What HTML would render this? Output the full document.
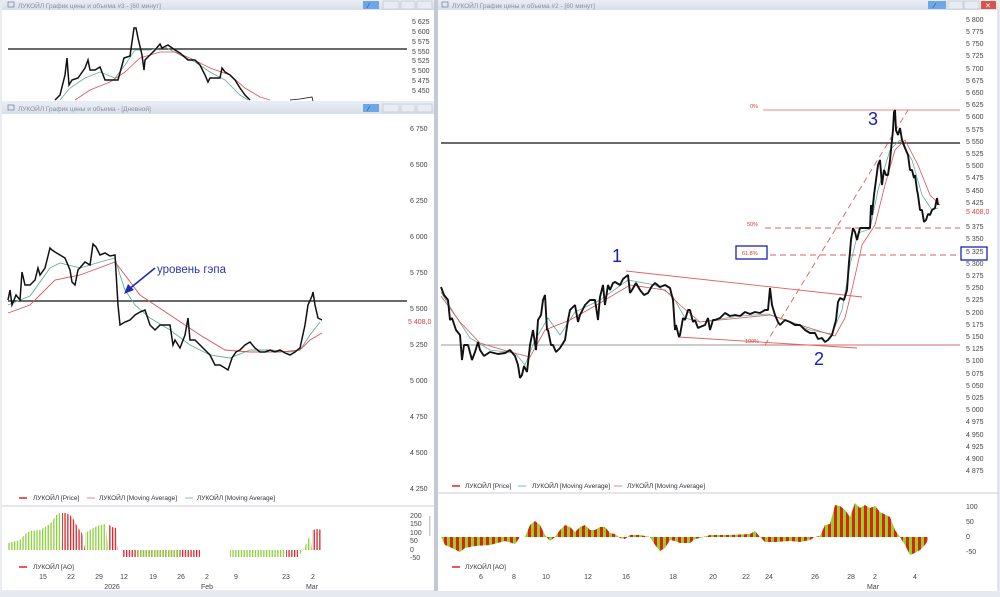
<!DOCTYPE html>
<html><head><meta charset="utf-8"><style>
html,body{margin:0;padding:0;background:#fff;width:1000px;height:597px;overflow:hidden}
svg{display:block}
text{font-family:"Liberation Sans","DejaVu Sans",sans-serif}
.ax{font-size:7px;fill:#444}
.lg{font-size:6.5px;fill:#333}
.tt{font-size:6.5px;fill:#8a8fa0}
</style></head><body>
<svg width="1000" height="597" viewBox="0 0 1000 597" xmlns="http://www.w3.org/2000/svg">
<defs>
<pattern id="mix" width="6" height="10" patternUnits="userSpaceOnUse"><rect width="3.2" height="10" fill="#e81d17"/><rect x="3.2" width="2.8" height="10" fill="#7fdc1e"/></pattern>
<pattern id="lgG" width="2.8" height="10" patternUnits="userSpaceOnUse"><rect width="1.3" height="10" fill="#8ccf3a"/></pattern>
<pattern id="lgR" width="2.8" height="10" patternUnits="userSpaceOnUse"><rect width="1.3" height="10" fill="#d9262b"/></pattern>
<linearGradient id="tb" x1="0" y1="0" x2="0" y2="1"><stop offset="0" stop-color="#e9eef5"/><stop offset="1" stop-color="#d7dfea"/></linearGradient>
</defs>
<rect width="1000" height="597" fill="#e9edf2"/>

<!-- LEFT TOP WINDOW -->
<rect x="2" y="0" width="432" height="101" fill="#fff"/>
<rect x="2" y="0" width="432" height="10" fill="url(#tb)"/>
<rect x="8" y="2" width="6" height="5" fill="none" stroke="#7a8aa0" stroke-width="0.8"/>
<text x="18" y="8" class="tt">ЛУКОЙЛ График цены и объема #3 - [60 минут]</text>
<rect x="363" y="1" width="16" height="8" fill="#6fa6e8"/><text x="368" y="8" font-size="7" fill="#1a3a80">⁄</text>
<rect x="383" y="1" width="16" height="8" fill="#e8ecf2" stroke="#b0b8c6" stroke-width="0.5"/>
<rect x="401" y="1" width="14" height="8" fill="#e8ecf2" stroke="#b0b8c6" stroke-width="0.5"/>
<rect x="417" y="1" width="15" height="8" fill="#e8ecf2" stroke="#b0b8c6" stroke-width="0.5"/>
<line x1="8" y1="49" x2="407" y2="49" stroke="#111" stroke-width="1.2"/>
<g class="ax">
<text x="412" y="24">5 625</text><text x="412" y="34">5 600</text><text x="412" y="44">5 575</text><text x="412" y="54">5 550</text><text x="412" y="63">5 525</text><text x="412" y="73">5 500</text><text x="412" y="83">5 475</text><text x="412" y="93">5 450</text>
</g>
<polyline fill="none" stroke="#5fae9c" stroke-width="0.8" points="60,100 70,88 85,78 100,72 115,78 125,65 135,50 150,50 165,47 180,55 195,62 210,72 225,80 240,95 248,100"/>
<polyline fill="none" stroke="#d9545a" stroke-width="0.8" points="75,100 90,90 110,82 125,72 140,58 160,52 175,52 190,58 210,68 230,75 245,88 260,97 270,100"/>
<polyline fill="none" stroke="#111" stroke-width="1.5" points="55,100 60,95 65,75 67,58 69,85 72,80 78,78 85,68 88,60 90,70 95,70 100,67 105,80 110,80 118,80 124,58 130,56 134,28 136,28 138,38 142,55 144,70 145,60 150,55 155,50 160,44 162,48 168,45 175,50 180,53 188,60 195,60 200,65 205,75 208,82 210,78 220,78 222,68 225,72 230,75 235,80 240,88 245,95 250,100"/>
<polyline fill="none" stroke="#111" stroke-width="0.8" points="290,100 300,99 312,97 313,101"/>
<rect x="434" y="0" width="4" height="597" fill="#c3cad5"/>

<!-- LEFT DAILY WINDOW -->
<rect x="2" y="102" width="432" height="488" fill="#fff"/>
<rect x="2" y="102" width="432" height="12" fill="url(#tb)"/>
<rect x="8" y="105" width="6" height="5" fill="none" stroke="#7a8aa0" stroke-width="0.8"/>
<text x="18" y="111" class="tt">ЛУКОЙЛ График цены и объема - [Дневной]</text>
<rect x="363" y="104" width="16" height="8" fill="#6fa6e8"/><text x="368" y="111" font-size="7" fill="#1a3a80">⁄</text>
<rect x="383" y="104" width="16" height="8" fill="#e8ecf2" stroke="#b0b8c6" stroke-width="0.5"/>
<rect x="401" y="104" width="14" height="8" fill="#e8ecf2" stroke="#b0b8c6" stroke-width="0.5"/>
<rect x="417" y="104" width="15" height="8" fill="#e8ecf2" stroke="#b0b8c6" stroke-width="0.5"/>
<g class="ax">
<text x="410" y="131">6 750</text><text x="410" y="167">6 500</text><text x="410" y="203">6 250</text><text x="410" y="239">6 000</text><text x="410" y="275">5 750</text><text x="410" y="311">5 500</text><text x="408" y="324" fill="#e23a3a">5 408,0</text><text x="410" y="347">5 250</text><text x="410" y="383">5 000</text><text x="410" y="419">4 750</text><text x="410" y="455">4 500</text><text x="410" y="491">4 250</text>
</g>
<line x1="8" y1="301" x2="407" y2="301" stroke="#111" stroke-width="1.2"/>
<polyline fill="none" stroke="#5fae9c" stroke-width="0.9" points="8,305 30,296 50,268 60,263 80,268 100,262 115,258 120,275 125,290 135,305 150,318 170,330 190,345 210,355 230,358 250,350 270,350 290,352 300,350 310,335 320,322"/>
<polyline fill="none" stroke="#d9545a" stroke-width="0.9" points="8,313 30,305 55,280 80,275 115,262 125,275 140,295 170,315 200,335 225,350 250,352 280,352 300,350 310,340 322,333"/>
<polyline fill="none" stroke="#111" stroke-width="1.5" points="8,300 10,290 12,305 16,295 20,300 22,272 25,285 30,285 35,280 38,268 40,275 45,268 50,248 52,250 55,252 60,255 65,258 70,270 72,282 75,285 78,270 85,262 90,265 93,244 96,247 100,255 105,253 110,256 115,255 118,305 120,325 125,322 130,320 135,315 140,312 145,310 150,325 155,330 160,325 170,325 173,345 175,340 180,348 185,335 188,318 190,340 195,340 200,345 205,350 210,355 215,365 220,365 225,368 228,370 232,358 236,352 240,350 245,345 250,342 255,348 260,352 265,352 270,350 275,352 280,350 285,353 290,355 295,352 300,348 305,325 308,305 312,296 313,292 315,305 318,318 322,320"/>
<line x1="155" y1="268" x2="128" y2="290" stroke="#1e2ab8" stroke-width="1.6"/>
<polygon points="124,294 128,284 134,290" fill="#1e2ab8"/>
<text x="157" y="273" font-size="11.5" fill="#2b35b0">уровень гэпа</text>
<line x1="19" y1="498" x2="27" y2="498" stroke="#d22" stroke-width="1.5"/><text x="33" y="500" class="lg">ЛУКОЙЛ [Price]</text>
<line x1="87" y1="498" x2="95" y2="498" stroke="#e99" stroke-width="1.2"/><text x="99" y="500" class="lg">ЛУКОЙЛ [Moving Average]</text>
<line x1="185" y1="498" x2="193" y2="498" stroke="#9d9" stroke-width="1.2"/><text x="197" y="500" class="lg">ЛУКОЙЛ [Moving Average]</text>
<line x1="2" y1="506" x2="434" y2="506" stroke="#c8ced8" stroke-width="1"/>
<polygon fill="url(#lgG)" points="8,550 8,543 20,540 25,534 30,531 40,530 45,527 50,524 53,520 56,515 60,513 62,550"/>
<polygon fill="url(#lgR)" points="62,550 62,513 66,513 70,515 74,520 78,528 82,533 85,550"/>
<polygon fill="url(#lgG)" points="85,550 85,533 90,530 95,527 100,525 106,524 108,550"/>
<polygon fill="url(#lgR)" points="108,550 108,524 112,527 116,528 118,550"/>
<polygon fill="url(#lgR)" points="122,550 122,557 200,557 200,550"/>
<polygon fill="url(#lgG)" points="137,550 137,557 180,557 180,550"/>
<polygon fill="url(#lgG)" points="230,550 230,557 285,557 285,550"/>
<polygon fill="url(#lgR)" points="286,550 286,557 298,557 298,550"/>
<polygon fill="url(#lgG)" points="300,550 300,555 304,548 307,542 310,535 312,550"/>
<polygon fill="url(#lgR)" points="312,550 312,530 318,529 322,530 322,550"/>
<g class="ax">
<text x="410" y="518">200</text><text x="410" y="526">150</text><text x="410" y="535">100</text><text x="410" y="543">50</text><text x="410" y="552">0</text><text x="410" y="560">-50</text>
</g>
<rect x="429" y="516" width="1.5" height="20" fill="#ccc"/>
<line x1="19" y1="567" x2="27" y2="567" stroke="#d22" stroke-width="1.5"/><text x="33" y="569" class="lg">ЛУКОЙЛ [AO]</text>
<g class="ax" text-anchor="middle">
<text x="43" y="579">15</text><text x="71" y="579">22</text><text x="99" y="579">29</text><text x="124" y="579">12</text><text x="153" y="579">19</text><text x="181" y="579">26</text><text x="207" y="579">2</text><text x="236" y="579">9</text><text x="286" y="579">23</text><text x="313" y="579">2</text>
<text x="112" y="589">2026</text><text x="207" y="589">Feb</text><text x="312" y="589">Mar</text>
</g>

<!-- RIGHT WINDOW -->
<rect x="438" y="0" width="560" height="591" fill="#fff"/>
<rect x="438" y="0" width="560" height="10" fill="url(#tb)"/>
<rect x="442" y="2" width="6" height="5" fill="none" stroke="#7a8aa0" stroke-width="0.8"/>
<text x="452" y="8" class="tt" fill="#555">ЛУКОЙЛ График цены и объема #2 - [60 минут]</text>
<rect x="928" y="1" width="18" height="8" fill="#6fa6e8"/><text x="934" y="8" font-size="7" fill="#1a3a80">⁄</text>
<rect x="948" y="1" width="15" height="8" fill="#e8ecf2" stroke="#b0b8c6" stroke-width="0.5"/>
<rect x="964" y="1" width="15" height="8" fill="#e8ecf2" stroke="#b0b8c6" stroke-width="0.5"/>
<rect x="981" y="1" width="15" height="8" fill="#d9534a"/><text x="985" y="8" font-size="7" fill="#fff">✕</text>
<line x1="998" y1="10" x2="998" y2="591" stroke="#c9d0da"/>
<g class="ax">
<text x="966" y="22">5 800</text><text x="966" y="34">5 775</text><text x="966" y="46">5 750</text><text x="966" y="58">5 725</text><text x="966" y="71">5 700</text><text x="966" y="83">5 675</text><text x="966" y="95">5 650</text><text x="966" y="107">5 625</text><text x="966" y="119">5 600</text><text x="966" y="132">5 575</text><text x="966" y="144">5 550</text><text x="966" y="156">5 525</text><text x="966" y="168">5 500</text><text x="966" y="180">5 475</text><text x="966" y="193">5 450</text><text x="966" y="205">5 425</text><text x="966" y="214" fill="#e23a3a">5 408,0</text><text x="966" y="229">5 375</text><text x="966" y="241">5 350</text><text x="966" y="254">5 325</text><text x="966" y="266">5 300</text><text x="966" y="278">5 275</text><text x="966" y="290">5 250</text><text x="966" y="302">5 225</text><text x="966" y="315">5 200</text><text x="966" y="327">5 175</text><text x="966" y="339">5 150</text><text x="966" y="351">5 125</text><text x="966" y="363">5 100</text><text x="966" y="376">5 075</text><text x="966" y="388">5 050</text><text x="966" y="400">5 025</text><text x="966" y="412">5 000</text><text x="966" y="424">4 975</text><text x="966" y="437">4 950</text><text x="966" y="449">4 925</text><text x="966" y="461">4 900</text><text x="966" y="473">4 875</text>
</g>
<rect x="961" y="247" width="26" height="13" fill="none" stroke="#1a22b0" stroke-width="1.3"/>
<line x1="441" y1="143" x2="960" y2="143" stroke="#111" stroke-width="1.2"/>
<line x1="441" y1="345" x2="960" y2="345" stroke="#777" stroke-width="0.8"/>
<line x1="763" y1="110" x2="960" y2="110" stroke="#e06060" stroke-width="0.8"/>
<text x="750" y="108" font-size="5.5" fill="#d33">0%</text>
<line x1="765" y1="228" x2="960" y2="228" stroke="#d86060" stroke-width="0.9" stroke-dasharray="6,4"/>
<text x="747" y="226" font-size="5.5" fill="#d33">50%</text>
<line x1="770" y1="255" x2="960" y2="255" stroke="#d86060" stroke-width="0.9" stroke-dasharray="6,4"/>
<rect x="736" y="246" width="31" height="13" fill="none" stroke="#1a22b0" stroke-width="1.3"/>
<text x="742" y="255" font-size="5.5" fill="#d33">61.8%</text>
<line x1="760" y1="345" x2="960" y2="345" stroke="#e06060" stroke-width="0.8"/>
<text x="745" y="343" font-size="5.5" fill="#d33">100%</text>
<line x1="765" y1="345" x2="908" y2="110" stroke="#d86060" stroke-width="0.9" stroke-dasharray="6,4"/>
<line x1="626" y1="271" x2="862" y2="297" stroke="#e06060" stroke-width="0.9"/>
<line x1="678" y1="337" x2="857" y2="348" stroke="#e06060" stroke-width="0.9"/>
<polyline fill="none" stroke="#5fae9c" stroke-width="0.8" points="441,292 455,315 470,338 490,350 515,353 525,365 535,340 548,318 560,335 575,312 600,300 628,280 655,285 672,295 685,318 700,322 740,316 768,314 780,318 810,330 832,334 842,310 850,265 858,233 870,229 878,190 890,150 900,140 912,160 922,195 932,210 938,208"/>
<polyline fill="none" stroke="#d9545a" stroke-width="0.8" points="441,296 460,322 480,343 510,352 530,357 545,330 570,320 600,303 630,285 665,290 680,305 700,322 740,318 770,315 800,325 835,336 845,318 853,285 862,245 875,225 885,185 895,150 905,140 918,165 930,195 940,205"/>
<polyline fill="none" stroke="#111" stroke-width="1.9" stroke-linejoin="bevel" points="441,287 444,295 448,300 450,320 452,318 456,330 460,335 462,360 464,345 468,345 472,360 475,352 478,342 480,350 484,356 490,352 498,354 505,353 510,350 515,356 518,365 520,378 522,375 524,366 527,372 530,345 533,330 536,350 538,320 541,315 543,300 545,295 547,330 548,330 551,345 553,345 556,352 560,348 565,340 568,320 570,310 575,305 578,322 580,315 585,305 590,300 595,300 598,320 600,297 603,285 605,305 608,285 610,290 613,283 615,282 620,285 623,279 628,275 630,293 632,290 636,283 640,290 644,295 648,293 652,286 655,283 660,287 665,285 670,288 673,300 675,330 676,325 679,337 680,335 683,318 685,320 688,310 690,310 693,322 695,320 698,328 700,327 705,325 708,318 710,330 713,320 715,320 720,318 725,313 730,316 735,315 740,316 745,312 750,314 755,312 760,313 765,310 768,310 770,288 772,305 775,315 778,322 780,325 785,320 790,322 795,325 800,325 805,330 810,333 815,333 818,339 822,338 825,342 828,340 832,335 836,320 838,302 840,298 844,300 847,290 849,262 850,252 851,240 853,228 855,232 857,240 860,228 866,228 870,228 871,205 872,215 874,195 876,180 878,165 880,160 882,185 884,170 886,175 888,175 890,160 893,130 894,112 895,110 896,130 898,135 900,128 902,140 905,148 908,155 910,170 912,170 914,178 915,175 917,190 918,195 920,210 922,210 924,222 926,220 928,214 930,215 932,210 935,208 937,198 938,205"/>
<text x="612" y="262" font-size="18" fill="#1b20a8">1</text>
<text x="814" y="365" font-size="18" fill="#1b20a8">2</text>
<text x="868" y="125" font-size="18" fill="#1b20a8">3</text>
<line x1="452" y1="486" x2="460" y2="486" stroke="#d22" stroke-width="1.5"/><text x="465" y="488" class="lg">ЛУКОЙЛ [Price]</text>
<line x1="518" y1="486" x2="526" y2="486" stroke="#8cc" stroke-width="1.2"/><text x="532" y="488" class="lg">ЛУКОЙЛ [Moving Average]</text>
<line x1="614" y1="486" x2="622" y2="486" stroke="#e99" stroke-width="1.2"/><text x="627" y="488" class="lg">ЛУКОЙЛ [Moving Average]</text>
<line x1="438" y1="493" x2="998" y2="493" stroke="#c8ced8" stroke-width="1"/>
<polygon fill="url(#mix)" points="441,537 445,545 452,548 460,552 465,548 475,546 490,545 505,541 515,544 520,537 525,537 530,525 535,521 540,525 545,535 550,541 555,537 560,530 565,525 570,527 575,532 580,527 585,525 590,530 595,530 600,527 605,527 610,533 615,534 620,538 625,539 630,535 640,535 650,537 655,545 660,551 665,548 670,540 675,541 680,543 690,543 695,539 700,538 710,535 730,535 750,534 755,531 760,537 765,542 775,542 790,541 800,542 810,540 815,537 820,536 825,525 830,524 835,505 840,506 845,510 850,517 855,503 860,508 865,505 870,508 875,506 880,512 890,517 895,530 900,537 905,545 910,555 915,553 920,550 925,545 928,540 928,537"/>
<g class="ax">
<text x="966" y="509">100</text><text x="966" y="524">50</text><text x="966" y="539">0</text><text x="966" y="554">-50</text>
</g>
<line x1="452" y1="567" x2="460" y2="567" stroke="#d22" stroke-width="1.5"/><text x="465" y="569" class="lg">ЛУКОЙЛ [AO]</text>
<g class="ax" text-anchor="middle">
<text x="481" y="579">6</text><text x="514" y="579">8</text><text x="546" y="579">10</text><text x="588" y="579">12</text><text x="626" y="579">16</text><text x="673" y="579">18</text><text x="713" y="579">20</text><text x="746" y="579">22</text><text x="769" y="579">24</text><text x="815" y="579">26</text><text x="851" y="579">28</text><text x="875" y="579">2</text><text x="915" y="579">4</text>
<text x="873" y="589">Mar</text>
</g>
<line x1="960" y1="594" x2="985" y2="594" stroke="#999"/>
<rect x="0" y="591" width="1000" height="6" fill="#e6eaf0"/>
</svg>
</body></html>
